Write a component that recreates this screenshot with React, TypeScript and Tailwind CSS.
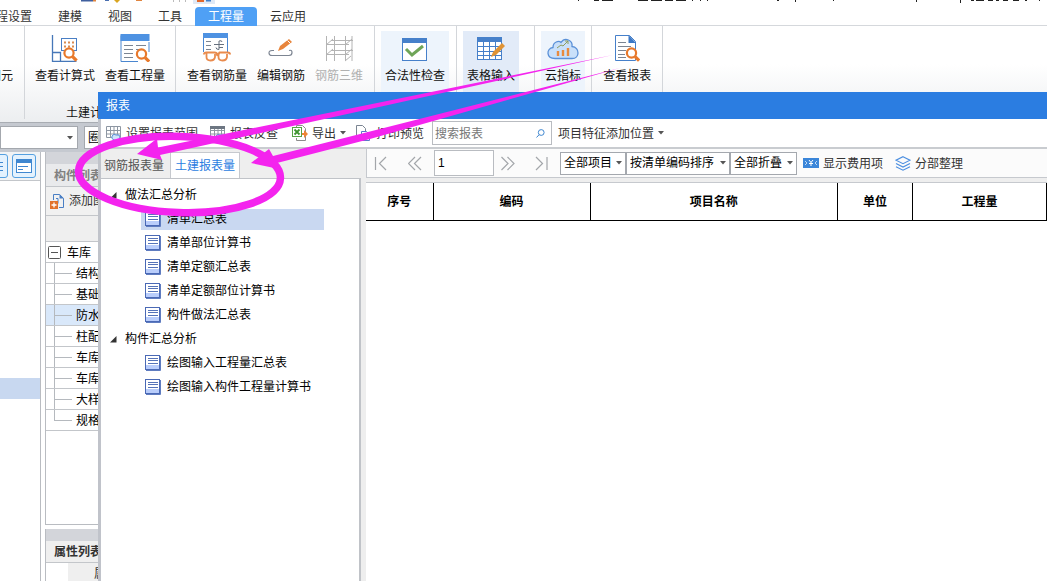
import React from "react";
import clsx from "clsx";

const MENU = ["工程设置", "建模", "视图", "工具", "工程量", "云应用"];

const TREE = [
  {
    title: "做法汇总分析",
    items: ["清单汇总表", "清单部位计算书", "清单定额汇总表", "清单定额部位计算书", "构件做法汇总表"],
  },
  {
    title: "构件汇总分析",
    items: ["绘图输入工程量汇总表", "绘图输入构件工程量计算书"],
  },
];

const COMPONENTS = ["结构", "基础", "防水", "柱配", "车库", "车库", "大样", "规格"];

const COLUMNS = [
  { name: "序号", width: "w-[67px]" },
  { name: "编码", width: "w-[157px]" },
  { name: "项目名称", width: "" },
  { name: "单位", width: "w-[75px]" },
  { name: "工程量", width: "w-[134px]" },
];

/* ---------- icons ---------- */

const Lens = ({ x, y }: { x: number; y: number }) => (
  <g stroke="#e8792b" fill="#fff">
    <circle cx={x} cy={y} r="4.6" strokeWidth="2.2" />
    <path d={`M${x + 3.6} ${y + 3.6}l4 4`} strokeWidth="3.2" />
  </g>
);

const FormulaIcon = () => (
  <svg width="28" height="28" viewBox="0 0 28 28" fill="none" aria-hidden="true">
    <path d="M1.500 1v26.500h24M1.500 18.500h8v9" stroke="#4677b8" strokeWidth="1.300" />
    <rect x="10.500" y="4.500" width="15" height="12" fill="#fff" stroke="#4a7fc4" />
    <path d="M13 8.500h11M13 12.500h11" stroke="#d98b50" strokeWidth="2" strokeDasharray="2 2" />
    <Lens x={18} y={19} />
  </svg>
);

const QuantityIcon = () => (
  <svg width="30" height="28" viewBox="0 0 30 28" fill="none" aria-hidden="true">
    <path d="M1 1.500v26h17M29 8v10" stroke="#4a86cf" />
    <rect x=".5" y="0" width="29" height="7" fill="#4e92e2" />
    <path d="M4 11.500h9M4 15.500h9M4 19.500h9M4 23.500h9M16 11.500h10M16 15.500h3" stroke="#7b8592" />
    <Lens x={21.500} y={20} />
  </svg>
);

const GlassesIcon = () => (
  <svg width="30" height="29" viewBox="0 0 30 29" fill="none" aria-hidden="true">
    <path d="M1.500 1v18M25.500 1v18" stroke="#4a86cf" />
    <rect x="1" y="0" width="25" height="5" fill="#4e92e2" />
    <path d="M4 8.500h5M4 12.500h5M4 16.500h5" stroke="#7b8592" />
    <path d="M12 11.500h10M17 11.500v5q-3 0-3-2M17 11v-3q3-1 3 1M17 14.500h4" stroke="#66707e" />
    <path d="M2 21.500q0-2 2.500-2h8q2.500 0 2.500 2t2.500-2h8q2.500 0 2.500 2" stroke="#e98b4d" strokeWidth="2" />
    <path d="M4.500 20v4q0 3.500 4 3.500t4.500-3.500v-3M16.500 20v4q0 3.500 4 3.500t4.500-3.500v-3" stroke="#e98b4d" strokeWidth="1.800" />
  </svg>
);

const EditBarIcon = () => (
  <svg width="26" height="28" viewBox="0 0 26 28" fill="none" aria-hidden="true">
    <path d="M6 16.500H4q-3 0-3 2.500t3 2.500h17q3 0 3-3t-3-2" stroke="#7d8592" strokeWidth="1.200" />
    <path d="M10 17l2-5L21 5l3 3-9 7z" fill="#e8853c" />
    <path d="M19.500 6.500l3 3" stroke="#fff" />
  </svg>
);

const GridIcon = () => (
  <svg width="28" height="28" viewBox="0 0 28 28" fill="none" stroke="#b4b4b4" aria-hidden="true">
    <path d="M1.500 2v25M9.500 2v25M20.500 2v25M27 2v25M1 10.500h23M1 20.500h23M6 6.500h22M6 16.500h22M1 11l7-6M1 21l7-6M20 11l7-6M20 21l7-6M20 27l6-5" />
  </svg>
);

const CheckIcon = () => (
  <svg width="26" height="26" viewBox="0 0 26 26" fill="none" aria-hidden="true">
    <rect x=".5" y="3.500" width="24" height="22" fill="#fff" stroke="#4680ca" />
    <rect x="0" y="3" width="25" height="5" fill="#4680ca" />
    <path d="M4 14l6 6L21 11" stroke="#6fa558" strokeWidth="3" />
  </svg>
);

const TableEditIcon = () => (
  <svg width="28" height="27" viewBox="0 0 28 27" fill="none" aria-hidden="true">
    <rect x=".5" y="3.500" width="24" height="22" fill="#fff" stroke="#4680ca" />
    <rect x="0" y="3" width="25" height="5" fill="#4680ca" />
    <path d="M0 12.500h25M0 17.500h25M0 21.500h25M6.500 8v17M12.500 8v17M18.500 8v17" stroke="#4680ca" />
    <path d="M14 23l2-5 9-9 3 3-9 9z" fill="#e09334" />
  </svg>
);

const CloudIcon = () => (
  <svg width="32" height="28" viewBox="0 0 32 28" fill="none" aria-hidden="true">
    <path d="M8 24.500c-9 0-9-10-2-11 0-6 6-7 8-5 4-6 12-2 11 4 8 1 8 12 0 12z" fill="#c9e0fa" stroke="#5b91d8" strokeWidth="1.300" />
    <path d="M11 22v-5M16 22v-6M21 22v-8" stroke="#e88a3e" strokeWidth="2.400" />
    <path d="M10 14l4-3 2 1 5-5M18 7h3v3" stroke="#8d9c5e" />
  </svg>
);

const ReportIcon = () => (
  <svg width="26" height="28" viewBox="0 0 26 28" fill="none" aria-hidden="true">
    <path d="M1.500 1.500h14l6 6v19h-20z" fill="#fff" stroke="#4680ca" />
    <path d="M14.500 1v8h7.500z" fill="#3c78c6" />
    <path d="M4 8.500h8M4 12.500h13M4 16.500h8M4 20.500h7M4 23.500h8" stroke="#7b8592" />
    <Lens x={17.500} y={19} />
  </svg>
);

const Caret = () => (
  <svg width="6" height="4" viewBox="0 0 6 4" aria-hidden="true">
    <path d="M0 0h6L3 3.500z" fill="#555" />
  </svg>
);

const SheetGridIcon = ({ dark }: { dark?: boolean }) => (
  <svg width="16" height="16" viewBox="0 0 16 16" fill="none" aria-hidden="true">
    <path d="M.5 1.500h14v11H.5zM.5 5.500h14M.5 9h14M4.500 1v12M8 1v12M11.500 1v12" stroke="#8e97a3" />
    {dark && <path d="M0 1h15v3H0z" fill="#6d7682" />}
    <path d="M6 11q2-3 4-1 4-1 4 2t-3 3H8q-3-1-2-4z" fill="#cfe3fa" stroke="#5b91d8" />
  </svg>
);

const ExportIcon = () => (
  <svg width="16" height="16" viewBox="0 0 16 16" fill="none" aria-hidden="true">
    <path d="M4.500 3V.5h6l3 3v12h-9V13" stroke="#8c8c8c" />
    <rect x=".5" y="2.500" width="9" height="9" fill="#fff" stroke="#57a345" />
    <path d="M2.500 4.500l5 5M7.500 4.500l-5 5" stroke="#3f9430" strokeWidth="1.800" />
    <path d="M10 8h2V5l4 4-4 4v-3h-2z" fill="#ee8434" />
  </svg>
);

const PreviewIcon = () => (
  <svg width="16" height="16" viewBox="0 0 16 16" fill="none" aria-hidden="true">
    <path d="M.5 14.500V.5h6l3 3V7M.5 14.500h4" stroke="#7b8592" />
    <path d="M5.500 15.500v-9h5l3 3v6z" fill="#fff" stroke="#5b79c9" />
    <path d="M7 12.500h5" stroke="#5b79c9" />
  </svg>
);

const MoneyIcon = () => (
  <svg width="16" height="10" viewBox="0 0 16 10" fill="none" aria-hidden="true">
    <rect width="16" height="10" fill="#3b86d9" />
    <path d="M6 2l2 2.500L10 2M8 4.500V8M6 5.500h4" stroke="#fff" />
    <path d="M2 3l2 2-2 2M14 3l-2 2 2 2" stroke="#bcd9f7" />
  </svg>
);

const LayersIcon = () => (
  <svg width="16" height="15" viewBox="0 0 16 15" fill="none" stroke="#4c8fe0" strokeWidth="1.200" aria-hidden="true">
    <path d="M8 .7l7 3.500-7 3.500-7-3.500zM1 7.500L8 11l7-3.500M1 10.700l7 3.500 7-3.500" />
  </svg>
);

const SheetIcon = () => (
  <svg width="16" height="16" viewBox="0 0 16 16" fill="none" aria-hidden="true">
    <rect x=".5" y=".5" width="14" height="14" fill="#fff" stroke="#4a69b5" />
    <path d="M1 10h13v4H1z" fill="#b9cdfb" />
    <path d="M3 3.500h10M3 5.500h10M3 8.500h10" stroke="#5573b8" />
    <path d="M1 15.500h14.500V1" stroke="#5f7cc0" />
  </svg>
);

const AddDocIcon = () => (
  <svg width="15" height="16" viewBox="0 0 15 16" fill="none" aria-hidden="true">
    <path d="M3.500 7V1.500h6l4 4v9H9" stroke="#4a7fc4" />
    <path d="M9.500 1v4.500H14z" fill="#4a7fc4" />
    <path d="M6 5.500h2v5" stroke="#4a7fc4" />
    <rect y="8" width="8" height="8" fill="#e2732b" />
    <path d="M4 9.500v5M1.500 12h5" stroke="#fff" strokeWidth="1.300" />
  </svg>
);

const PanelIcon = () => (
  <svg width="16" height="15" viewBox="0 0 16 15" fill="none" aria-hidden="true">
    <rect x=".5" y=".5" width="15" height="13" fill="#fff" stroke="#3f87d0" />
    <rect width="16" height="4" fill="#3f87d0" />
    <path d="M2 7.500h10M2 10.500h5" stroke="#3f87d0" />
  </svg>
);

/* bottom edge of the quick access bar and the window title */
const TitleRemains = () => (
  <svg width="1047" height="4" viewBox="0 0 1047 4" aria-hidden="true">
    <path d="M81 0h12v1.500H81z" fill="#3f5f9e" />
    <path d="M93 0h3v1.500h-3zM136 0h6v1h-6z" fill="#e0853f" />
    <path d="M105 0h4v1h-4z" fill="#4a6fb0" />
    <path d="M114 0h6l-3 3z" fill="#d9a520" />
    <path d="M173 0h1v2h-1zM179 0h1v2h-1zM185 0h1v2h-1z" fill="#bbb" />
    <path d="M193 0h22v4h-22z" fill="#dfe9f6" />
    <path d="M197 0h7v2h-7z" fill="#e2672b" />
    <path d="M206 0h5v1.500h-5z" fill="#3f7fca" />
    <path
      d="M578 0h1v1h-1zM594 0h5v1h-5zM602 0h11v1h-11zM638 0h10v1h-10zM651 0h11v1h-11zM665 0h8v1h-8zM676 0h10v1h-10zM692 0h1v1h-1zM700 0h1v1h-1zM707 0h1v1h-1zM777 0h2v1h-2zM795 0h1v2h-1zM833 0h1v1h-1zM916 0h1v2h-1zM960 0h1v3h-1zM971 0h3v1h-3zM976 0h8v1h-8zM988 0h5v1h-5zM996 0h3v1h-3zM1003 0h5v1h-5zM1013 0h6v1h-6zM1025 0h2v1h-2zM1039 0h1v1h-1z"
      fill="#222"
    />
  </svg>
);

/* ---------- ribbon ---------- */

interface RibbonButtonProps {
  label: string;
  icon?: React.ReactNode;
  className?: string;
}

const RibbonButton = ({ label, icon, className = "px-[5px]" }: RibbonButtonProps) => (
  <button type="button" className={clsx("flex h-[62px] shrink-0 flex-col items-center pt-0.5 whitespace-nowrap", className)}>
    <span className="flex h-[29px] items-center">{icon}</span>
    <span className="mt-[5px] leading-[18px]">{label}</span>
  </button>
);

const RibbonGroup = ({ children, className, caption }: { children: React.ReactNode; className?: string; caption?: string }) => (
  <div className={clsx("flex h-[93px] shrink-0 flex-col border-r border-[#d3d6da] pt-[5px]", className)}>
    <div className="flex">{children}</div>
    {caption && <div className="mt-3 pl-9 leading-4">{caption}</div>}
  </div>
);

function Ribbon() {
  return (
    <header>
      <div className="h-[7px] overflow-hidden">
        <TitleRemains />
      </div>
      <nav className="-ml-[29px] flex h-[19px] border-b border-[#d5d8dc] text-[#333]">
        {MENU.map((name) => (
          <button
            key={name}
            type="button"
            className={clsx("h-[19px] shrink-0 px-[13px] leading-[21px]", name === "工程量" && "rounded-t-sm bg-[#4fa0f5] text-white")}
          >
            {name}
          </button>
        ))}
      </nav>
      <div className="flex h-[97px] overflow-hidden border-b border-[#a9adb3] bg-linear-to-b from-white from-40% to-[#eceef0] text-[#111]">
        <RibbonGroup className="w-[25px] items-end pr-1.5">
          <RibbonButton label="图元" />
        </RibbonGroup>
        <RibbonGroup className="px-[5px]" caption="土建计">
          <RibbonButton label="查看计算式" icon={<FormulaIcon />} />
          <RibbonButton label="查看工程量" icon={<QuantityIcon />} />
        </RibbonGroup>
        <RibbonGroup className="px-1.5">
          <RibbonButton label="查看钢筋量" icon={<GlassesIcon />} />
          <RibbonButton label="编辑钢筋" icon={<EditBarIcon />} />
          <RibbonButton label="钢筋三维" icon={<GridIcon />} className="px-[5px] text-[#b0b0b0]" />
        </RibbonGroup>
        <RibbonGroup className="pr-[7px] pl-1.5">
          <RibbonButton label="合法性检查" icon={<CheckIcon />} className="bg-[#edf4fc] px-1" />
        </RibbonGroup>
        <RibbonGroup className="pr-[15px] pl-1.5">
          <RibbonButton label="表格输入" icon={<TableEditIcon />} className="bg-[#e2ebf8] px-1" />
        </RibbonGroup>
        <RibbonGroup className="px-1.5">
          <RibbonButton label="云指标" icon={<CloudIcon />} className="bg-[#edf4fc] px-1" />
        </RibbonGroup>
        <RibbonGroup className="px-1.5">
          <RibbonButton label="查看报表" icon={<ReportIcon />} />
        </RibbonGroup>
      </div>
    </header>
  );
}

/* ---------- main window behind the dialog ---------- */

function Workspace() {
  return (
    <div className="flex min-h-0 flex-1 flex-col">
      <div className="flex h-[29px] shrink-0 items-center gap-1.5 bg-[#c5c9d0]">
        <button type="button" aria-label="展开" className="flex h-[23px] w-[78px] items-center justify-end border border-[#a4a8ae] bg-white pr-1">
          <Caret />
        </button>
        <div className="h-[23px] w-[100px] border border-[#a4a8ae] bg-white pl-[3px] leading-[23px]">圈</div>
      </div>
      <div className="flex min-h-0 flex-1">
        <aside className="flex w-[41px] flex-col border-r border-[#b9bcc1]">
          <div className="flex h-[29px] shrink-0 justify-end gap-1 overflow-hidden border-b border-[#c3c6ca] bg-[#f1f3f5] pt-0.5 pr-1">
            <button type="button" aria-label="列表" className="flex size-6 shrink-0 items-center justify-end rounded-[3px] border border-[#55a0e0] bg-[#e4f2fe] pr-1">
              <svg width="6" height="9" viewBox="0 0 6 9" stroke="#3f87d0" aria-hidden="true">
                <path d="M0 .5h6M0 4.500h6M0 8.500h6" />
              </svg>
            </button>
            <button type="button" aria-label="面板" className="flex size-6 shrink-0 items-center justify-center rounded-[3px] border border-[#55a0e0] bg-[#e4f2fe]">
              <PanelIcon />
            </button>
          </div>
          <div className="mt-[197px] h-[21px] bg-[#c8d8f0]" />
        </aside>
        <div className="ml-1 flex w-[200px] flex-col gap-1">
          <section className="flex flex-1 flex-col border-b border-l border-[#b9bcc1]">
            <div className="h-3 bg-[#d3d5da]" />
            <h2 className="h-[23px] border-b border-[#c3c6ca] bg-[#e9eaec] pl-2 leading-6 font-bold text-[#808080]">构件列表</h2>
            <button type="button" className="flex h-[29px] items-center gap-1 border-b border-[#c3c6ca] bg-[#f1f1f1] pl-1 text-[#333]">
              <AddDocIcon />
              添加图
            </button>
            <div className="h-[26px] border-b border-[#c3c6ca] bg-[#efefef]" />
            <ul>
              <li className="flex h-[21px] items-center border-b border-[#c3c6ca] pl-0.5">
                <svg width="13" height="13" viewBox="0 0 13 13" fill="#fff" stroke="#555" aria-hidden="true">
                  <rect x=".5" y=".5" width="12" height="12" rx="1" />
                  <path d="M3 6.500h7" />
                </svg>
                <span className="ml-1.5 pt-0.5">车库</span>
              </li>
              {COMPONENTS.map((name, i) => (
                <li key={i} className={clsx("flex h-[21px] items-center border-b border-[#c3c6ca] pl-2", name === "防水" && "bg-[#d9e8fa]")}>
                  <span className="flex h-full w-[18px] flex-col">
                    <span className="flex-1 border-b border-l border-[#b5b9be]" />
                    <span className={clsx("flex-1 border-[#b5b9be]", i < COMPONENTS.length - 1 && "border-l")} />
                  </span>
                  <span className="ml-1 pt-0.5">{name}</span>
                </li>
              ))}
            </ul>
          </section>
          <section className="h-[52px] shrink-0 border-l border-[#b9bcc1]">
            <div className="h-3 bg-[#d3d5da]" />
            <h2 className="h-[22px] border-b border-[#c3c6ca] bg-[#efefef] pl-2 leading-[22px] font-bold text-[#333]">属性列表</h2>
            <div className="ml-[22px] h-[18px] bg-[#efefef] pl-[26px] leading-[23px] text-[#333]">属</div>
          </section>
        </div>
      </div>
    </div>
  );
}

/* ---------- report dialog ---------- */

const ToolButton = ({ icon, label, caret, className }: { icon?: React.ReactNode; label: string; caret?: boolean; className?: string }) => (
  <button type="button" className={clsx("flex shrink-0 items-center gap-1 whitespace-nowrap text-[#333]", className)}>
    {icon}
    <span className="pt-0.5">{label}</span>
    {caret && <Caret />}
  </button>
);

const Picker = ({ label, value, className }: { label: string; value: string; className: string }) => (
  <div className={clsx("relative shrink-0", className)}>
    <select aria-label={label} className="h-[23px] w-full appearance-none border border-[#a4a8ae] bg-white pl-[3px] leading-[21px] text-black">
      <option>{value}</option>
    </select>
    <span className="pointer-events-none absolute inset-y-0 right-1 flex items-center">
      <Caret />
    </span>
  </div>
);

const PageButton = ({ label, d }: { label: string; d: string }) => (
  <button type="button" aria-label={label} className="shrink-0">
    <svg width="14" height="15" viewBox="0 0 14 15" fill="none" stroke="#a3a6aa" strokeWidth="1.200" aria-hidden="true">
      <path d={d} />
    </svg>
  </button>
);

function ReportTree() {
  return (
    <aside className="flex w-[265px] shrink-0 flex-col bg-[#eeeeee] pr-[5px]">
      <div role="tablist" className="flex h-[29px] items-end">
        <button type="button" role="tab" aria-selected={false} className="h-[26px] pt-0.5 pr-1.5 pl-[3px] text-[#555]">
          钢筋报表量
        </button>
        <button type="button" role="tab" aria-selected className="h-[26px] border border-b-0 border-[#c6c9ce] bg-white px-1 pt-px text-[#2b7de1]">
          土建报表量
        </button>
      </div>
      <ul className="flex-1 border-t border-r-2 border-[#c0c3c8] bg-white pt-1">
        {TREE.map((group) => (
          <li key={group.title}>
            <button type="button" className="flex h-6 items-center gap-2 pl-[9px]">
              <svg width="7" height="7" viewBox="0 0 7 7" aria-hidden="true">
                <path d="M6.500 0v6.500H0z" fill="#333" />
              </svg>
              {group.title}
            </button>
            <ul>
              {group.items.map((item) => (
                <li key={item} className="flex h-6 items-center pl-10">
                  <button type="button" className={clsx("flex h-[21px] w-[183px] items-center gap-1.5 pl-1 whitespace-nowrap", item === "清单汇总表" && "bg-[#c9d8f1]")}>
                    <SheetIcon />
                    {item}
                  </button>
                </li>
              ))}
            </ul>
          </li>
        ))}
      </ul>
    </aside>
  );
}

function ReportView() {
  return (
    <main className="flex min-w-0 flex-1 flex-col bg-[#eeeeee]">
      <div className="flex h-[29px] shrink-0 items-center border border-t-0 border-r-0 border-[#c6c9ce] bg-[#fbfbfb]">
        <div className="flex items-center pl-[7px]">
          <PageButton label="首页" d="M1.500 1v13M12 1L5.500 7.500 12 14" />
          <span className="w-5" />
          <PageButton label="上一页" d="M7 1L.5 7.500 7 14M13 1L6.500 7.500 13 14" />
          <input aria-label="页码" defaultValue="1" className="mr-[7px] ml-3 h-[26px] w-[60px] border border-[#b9bcc1] bg-white px-[3px] outline-none" />
          <span className="flex gap-5">
            <PageButton label="下一页" d="M.5 1L7 7.500.5 14M6.500 1L13 7.500 6.500 14" />
            <PageButton label="末页" d="M1 1l6.500 6.500L1 14M12 1v13" />
          </span>
        </div>
        <div className="ml-[11px] flex items-center">
          <Picker label="项目范围" value="全部项目" className="w-[66px]" />
          <Picker label="排序" value="按清单编码排序" className="w-[104px]" />
          <Picker label="折叠" value="全部折叠" className="w-[67px]" />
        </div>
        <ToolButton icon={<MoneyIcon />} label="显示费用项" className="ml-1.5" />
        <ToolButton icon={<LayersIcon />} label="分部整理" className="ml-3" />
      </div>
      <div className="mt-1 flex-1 border-t border-[#c6c9ce] bg-white">
        <table className="w-full table-fixed border-collapse">
          <thead>
            <tr className="h-[37px] border-b border-black">
              {COLUMNS.map((col) => (
                <th key={col.name} className={clsx("border-r border-black pt-0.5 font-bold text-black", col.width)}>
                  {col.name}
                </th>
              ))}
            </tr>
          </thead>
        </table>
      </div>
    </main>
  );
}

function ReportDialog() {
  return (
    <div role="dialog" aria-label="报表" className="absolute inset-y-0 top-[92px] right-0 left-[98px] flex flex-col bg-white">
      <h1 className="h-[27px] shrink-0 bg-[#2b7de1] pl-2 leading-[29px] text-white">报表</h1>
      <div className="flex min-h-0 flex-1 flex-col border-l-[3px] border-[#c0c3ca]">
        <div className="flex h-[30px] shrink-0 items-center border-b-2 border-[#c9ccd0] pl-[5px]">
          <ToolButton icon={<SheetGridIcon />} label="设置报表范围" />
          <ToolButton icon={<SheetGridIcon dark />} label="报表反查" className="ml-3" />
          <ToolButton icon={<ExportIcon />} label="导出" caret className="ml-3.5" />
          <ToolButton icon={<PreviewIcon />} label="打印预览" className="ml-2.5" />
          <label className="mr-1.5 ml-2 flex h-6 w-[120px] shrink-0 items-center border border-[#b9bcc1] bg-white pr-1.5 pl-0.5">
            <input aria-label="搜索报表" placeholder="搜索报表" className="min-w-0 flex-1 pt-0.5 outline-none placeholder:text-[#777]" />
            <svg width="9" height="9" viewBox="0 0 9 9" fill="none" stroke="#3f87d0" aria-hidden="true">
              <circle cx="5.200" cy="3.500" r="2.900" />
              <path d="M3 5.800L.5 8.500" />
            </svg>
          </label>
          <ToolButton label="项目特征添加位置" caret />
        </div>
        <div className="flex min-h-0 flex-1">
          <ReportTree />
          <ReportView />
        </div>
      </div>
    </div>
  );
}

/* hand-drawn ring and arrows pointing at the report tabs */
const Annotations = () => (
  <svg className="pointer-events-none absolute top-0 left-0" width="700" height="240" viewBox="0 0 700 240" aria-hidden="true">
    <ellipse cx="179.500" cy="174.500" rx="101" ry="38" transform="rotate(2 179.500 174.500)" fill="none" stroke="#f424ee" strokeWidth="7.500" />
    <path d="M613 55L158 147.500l-1-9L137 154l25 6-2-5 50-11 160-35z" fill="#f424ee" />
    <path d="M620 68L370 131.500 273 156l-4-7-18 14 28 6-2-6 93-24z" fill="#f424ee" />
  </svg>
);

export default function App() {
  return (
    <div className="relative flex h-screen flex-col overflow-hidden bg-white font-['Liberation_Sans','Noto_Sans_CJK_SC',sans-serif] text-xs text-black">
      <Ribbon />
      <Workspace />
      <ReportDialog />
      <Annotations />
    </div>
  );
}
